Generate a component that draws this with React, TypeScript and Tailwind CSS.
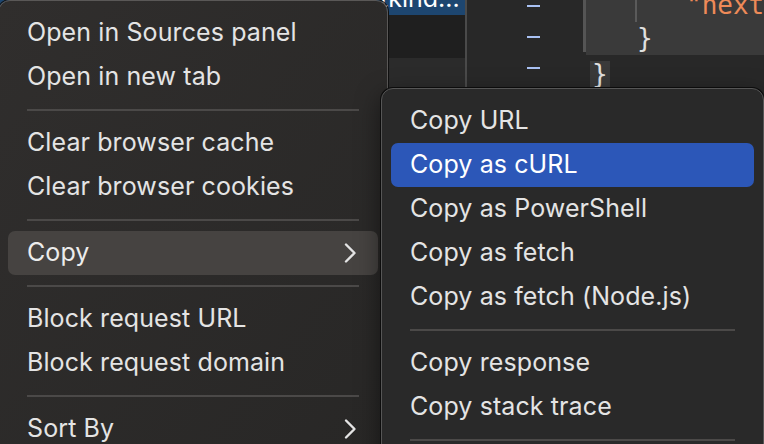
import React from "react";

type Entry = { label?: string; sep?: boolean; sub?: boolean; active?: "gray" | "blue" };

const mainMenu: Entry[] = [
  { label: "Open in Sources panel" },
  { label: "Open in new tab" },
  { sep: true },
  { label: "Clear browser cache" },
  { label: "Clear browser cookies" },
  { sep: true },
  { label: "Copy", sub: true, active: "gray" },
  { sep: true },
  { label: "Block request URL" },
  { label: "Block request domain" },
  { sep: true },
  { label: "Sort By", sub: true },
];

const copyMenu: Entry[] = [
  { label: "Copy URL" },
  { label: "Copy as cURL", active: "blue" },
  { label: "Copy as PowerShell" },
  { label: "Copy as fetch" },
  { label: "Copy as fetch (Node.js)" },
  { sep: true },
  { label: "Copy response" },
  { label: "Copy stack trace" },
  { sep: true },
];

function Chevron() {
  return (
    <svg width="13" height="22" viewBox="0 0 13 22" className="ml-auto mr-[2px]">
      <path d="M2 2.5 L10.5 11 L2 19.5" fill="none" stroke="#e4e4e4" strokeWidth="2.4" strokeLinecap="round" strokeLinejoin="round" />
    </svg>
  );
}

function MenuItems({ items }: { items: Entry[] }) {
  return (
    <>
      {items.map((it, i) =>
        it.sep ? (
          <div key={i} className="h-[22px] mx-[9px] px-[19px] flex items-center">
            <div className="h-[2px] w-full bg-[#4b4948]" />
          </div>
        ) : (
          <div
            key={i}
            className={`h-[44px] mx-[9px] px-[19px] flex items-center rounded-[7px] text-[25px] tracking-[0.1px] ${
              it.active === "blue"
                ? "bg-[#2c57b8] text-white"
                : it.active === "gray"
                ? "bg-[#464341] text-[#ececec]"
                : "text-[#e4e4e4]"
            }`}
          >
            <span>{it.label}</span>
            {it.sub && <Chevron />}
          </div>
        )
      )}
    </>
  );
}

export default function App() {
  return (
    <div
      className="relative w-[764px] h-[444px] overflow-hidden bg-[#282828]"
      style={{ fontFamily: "Inter, 'Noto Sans', sans-serif" }}
    >
      {/* background: devtools panes */}
      <div className="flex h-full">
        <div className="w-[465px] flex flex-col">
          <div className="h-[15px] bg-[#1d4670] relative overflow-hidden">
            <span className="absolute left-[380px] top-[-14px] text-white text-[25px] leading-[25px]">tkind...</span>
          </div>
          <div className="h-[43px] bg-[#1f1f1f]" />
          <div className="flex-1 bg-[#2b2b2b]" />
        </div>
        <div className="w-[2px] bg-[#4a4a4a]" />
        <div className="w-[116px] flex flex-col items-end pr-[43px] gap-[29px] pt-[5px]">
          <div className="w-[13px] h-[2px] bg-[#a9c1f3]" />
          <div className="w-[13px] h-[2px] bg-[#a9c1f3]" />
          <div className="w-[13px] h-[2px] bg-[#a9c1f3]" />
        </div>
        <div className="w-[3px] h-[52px] bg-[#555]" />
        <div className="flex-1 flex flex-col text-[26px]" style={{ fontFamily: "'DejaVu Sans Mono', monospace" }}>
          <div className="h-[55px] bg-[#3a3a3a] relative overflow-hidden">
            <div className="absolute left-[49px] top-0 w-[2px] h-[22px] bg-[#5a5a5a]" />
            <div className="absolute left-[100px] top-[-14px] text-[#ee8a58]">"nextS</div>
            <div className="absolute left-[51px] top-[19px] text-[#e0e0e0]">{"}"}</div>
          </div>
          <div className="pl-[4px]">
            <span className="inline-block bg-[#3a3a3a] text-[#e0e0e0] leading-[26px] px-[2px]">{"}"}</span>
          </div>
        </div>
      </div>

      {/* main context menu */}
      <div className="absolute left-[-2px] top-0 w-[390px] h-[470px] rounded-[12px] border border-[#5a5857] bg-gradient-to-br from-[#302e2d] to-[#282726] pt-[10px] shadow-[0_0_0_1px_#111]">
        <MenuItems items={mainMenu} />
      </div>

      {/* copy submenu */}
      <div className="absolute left-[381px] top-[88px] w-[383px] h-[380px] rounded-[12px] border border-[#565656] bg-[#292929] pt-[10px] shadow-[0_0_0_1px_#0c0c0c,0_8px_24px_rgba(0,0,0,0.5)]">
        <MenuItems items={copyMenu} />
      </div>
    </div>
  );
}
